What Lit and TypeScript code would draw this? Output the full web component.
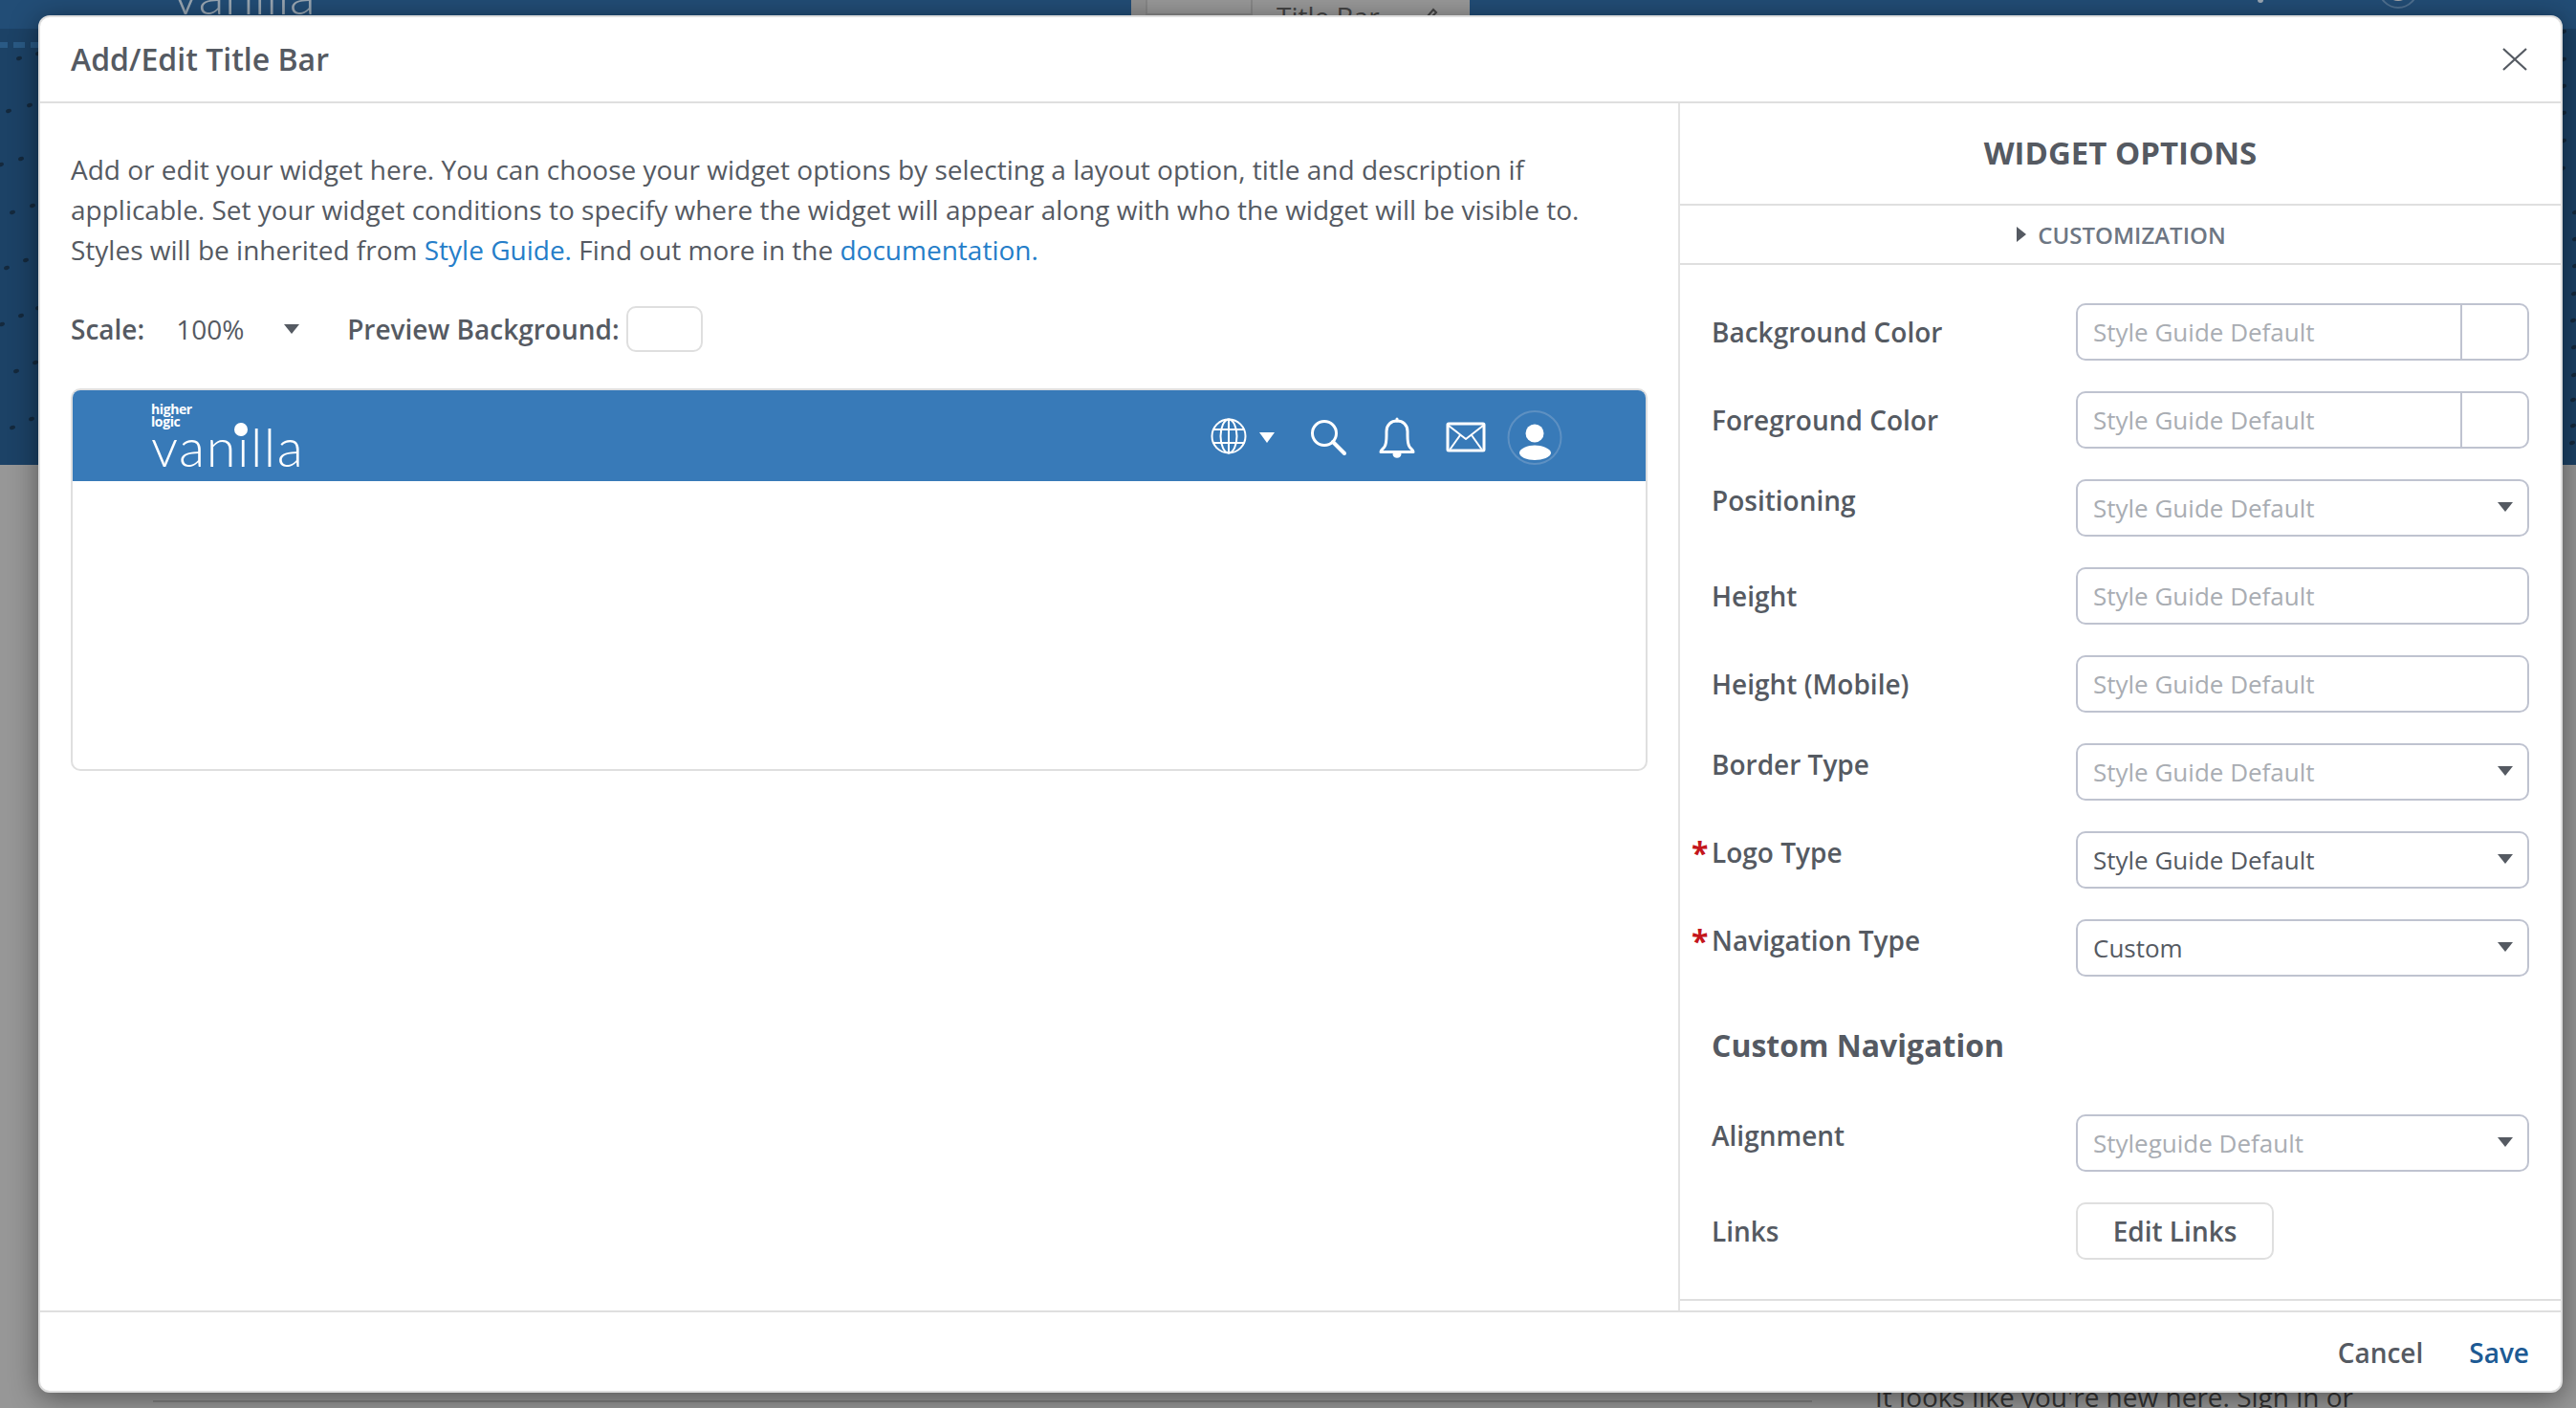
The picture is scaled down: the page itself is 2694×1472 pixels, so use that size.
import { LitElement, html, css, svg } from "lit";
import { customElement } from "lit/decorators.js";

const dots: [number, number][] = [
  [20, 61], [40, 56], [9, 116], [31, 110], [22, 166], [1, 172], [34, 215], [13, 222], [27, 272], [7, 280],
  [22, 330], [2, 339], [40, 322], [37, 379], [17, 388], [33, 438], [13, 447],
  [2681, 33], [2681, 62], [2681, 90], [2681, 118], [2681, 147], [2680, 176], [2693, 222], [2693, 250], [2693, 278],
  [2692, 307], [2691, 335], [2692, 363], [2692, 392], [2691, 418], [2691, 445], [2690, 463],
];
const dashes = [0, 12, 30, 60];

@customElement("app-root")
export class AppRoot extends LitElement {
  static styles = css`
    :host { display: block; width: 2694px; height: 1472px; position: relative; overflow: hidden; background: #979797; font-family: "Open Sans", sans-serif; color: #555a62; }
    * { box-sizing: border-box; }
    .hero { height: 486px; background: #1c4266; position: relative; overflow: hidden; }
    .heroband { height: 30px; background: #224d76; }
    .herotext { position: absolute; left: 180px; top: -36px; font-size: 56px; line-height: 60px; font-family: Lato, sans-serif; font-weight: 300; color: #9aa7b3; }
    .preview-peek { position: absolute; left: 1183px; top: 0; width: 354px; height: 20px; background: #999; border-left: 15px solid #929292; }
    .peek-tab { position: absolute; left: 1198px; top: 0; width: 112px; height: 16px; border-left: 2px solid #888; border-right: 2px solid #888; border-bottom: 2px solid #888; }
    .peek-title { position: absolute; left: 1335px; top: 0; font-size: 28px; line-height: 34px; color: #444; }
    .peek-pen { position: absolute; left: 1492px; top: 8px; }
    .heroav { position: absolute; left: 2487px; top: -33px; width: 42px; height: 42px; border: 2px solid #4f7090; border-radius: 50%; display: flex; align-items: center; justify-content: center; }
    .heroav span { width: 26px; height: 26px; background: #aaa; border-radius: 50%; }
    .peek { position: absolute; left: 1961px; top: 1440px; font-size: 28px; line-height: 40px; color: #333; white-space: nowrap; }
    .rule { position: absolute; left: 160px; top: 1464px; width: 1735px; height: 2px; background: #808080; }
    .dots { position: absolute; left: 0; top: 0; }
    .modal { position: absolute; left: 40px; top: 16px; width: 2640px; height: 1440px; background: #fff; border: 2px solid #dedede; border-radius: 12px; box-shadow: 0 5px 30px rgba(0,0,0,.45); display: flex; flex-direction: column; overflow: hidden; }
    .header { height: 90px; flex: none; border-bottom: 2px solid #dfdfdf; display: flex; align-items: center; justify-content: space-between; padding: 0 35px 0 32px; font-size: 32px; font-weight: 600; line-height: 44px; }
    .close { width: 26px; height: 24px; display: block; }
    .body { flex: 1; min-height: 0; display: flex; }
    .main { flex: 1; min-width: 0; padding: 48px 32px 0 32px; }
    .intro { font-size: 28px; line-height: 42px; margin: 0 0 38px; }
    a { color: #257ec9; text-decoration: none; }
    .toolbar { display: flex; align-items: center; height: 48px; margin-bottom: 38px; font-size: 28px; }
    .toolbar b { font-weight: 600; }
    .scale { margin-left: 33px; width: 113px; }
    .caret { width: 0; height: 0; border-left: 8px solid transparent; border-right: 8px solid transparent; border-top: 10px solid #555a62; }
    .toolbar b.pb { margin-left: 50px; }
    .swatch { width: 80px; height: 48px; margin-left: 7px; border: 2px solid #dfdfdf; border-radius: 10px; }
    .preview { height: 400px; border: 2px solid #dfdfdf; border-radius: 10px; overflow: hidden; }
    .bar { height: 95px; background: #387ab8; position: relative; color: #fff; }
    .logo { position: absolute; left: 82px; top: 13px; width: 170px; height: 80px; color: #fff; }
    .hl { position: absolute; left: 0; top: 0; font-size: 14px; line-height: 13px; font-weight: 700; letter-spacing: -0.4px; }
    .vn { position: absolute; left: 0; top: 16px; font-size: 56px; line-height: 60px; font-weight: 300; font-family: Lato, sans-serif; letter-spacing: 1.5px; }
    .dot { position: absolute; left: 87px; top: 21px; width: 14px; height: 14px; background: #fff; border-radius: 50%; }
    .icons { position: absolute; left: 1164px; top: 0; }
    .sidebar { width: 923px; flex: none; border-left: 2px solid #e3e3e3; display: flex; flex-direction: column; }
    .sh { height: 107px; flex: none; border-bottom: 2px solid #dfdfdf; padding-bottom: 2px; font-size: 33px; font-weight: 700; display: flex; align-items: center; justify-content: center; }
    .cust { height: 62px; flex: none; border-bottom: 2px solid #dfdfdf; padding-left: 2px; font-size: 24px; font-weight: 600; color: #6d7683; display: flex; align-items: center; justify-content: center; gap: 12px; }
    .tri { width: 0; height: 0; border-top: 8px solid transparent; border-bottom: 8px solid transparent; border-left: 10px solid #555a62; }
    .form { flex: 1; padding: 40px 33px 0; display: flex; flex-direction: column; border-bottom: 2px solid #dfdfdf; margin-bottom: 10px; }
    .row { display: flex; height: 60px; margin-bottom: 32px; position: relative; }
    .lab { width: 381px; flex: none; font-size: 28px; font-weight: 600; line-height: 60px; }
    .lab.hi { line-height: 44px; }
    .req { position: absolute; left: -21px; top: 1px; color: #c4161c; font-weight: 700; font-size: 32px; line-height: 44px; }
    .field { flex: 1; height: 60px; border: 2px solid #bfc3d0; border-radius: 10px; display: flex; align-items: center; padding-left: 16px; font-size: 26px; color: #a9adb3; position: relative; }
    .field.val { color: #555a62; }
    .field .sw { position: absolute; right: 0; top: 0; bottom: 0; width: 70px; border-left: 2px solid #bfc3d0; }
    .field .caret { position: absolute; right: 15px; top: 22px; }
    .cn { font-size: 32px; font-weight: 700; height: 60px; line-height: 60px; margin: 10px 0 42px; }
    .btn { width: 207px; height: 60px; border: 2px solid #dfdfdf; border-radius: 10px; font-size: 28px; font-weight: 600; display: flex; align-items: center; justify-content: center; }
    .footer { height: 84px; flex: none; border-top: 2px solid #dfdfdf; display: flex; align-items: center; justify-content: flex-end; padding: 2px 33px 0 0; gap: 48px; font-size: 28px; font-weight: 600; }
    .save { color: #1d5a94; }
  `;

  private field(text: string, opts: { val?: boolean; sw?: boolean; sel?: boolean } = {}) {
    return html`<div class="field ${opts.val ? "val" : ""}">${text}${opts.sw ? html`<span class="sw"></span>` : ""}${opts.sel ? html`<span class="caret"></span>` : ""}</div>`;
  }

  private row(label: string, f: unknown, hi = false, req = false) {
    return html`<div class="row">${req ? html`<span class="req">*</span>` : ""}<div class="lab ${hi ? "hi" : ""}">${label}</div>${f}</div>`;
  }

  render() {
    return html`
      <div class="hero">
        <div class="heroband"></div>
        <svg class="dots" width="2694" height="486">
          ${dashes.map((_, i) => svg`<rect x=${i * 18 - 4} y="44" width="12" height="6" fill="#2a5a85"></rect>`)}
          ${dots.map(([x, y]) => svg`<ellipse cx=${x} cy=${y} rx="3" ry="2" transform="rotate(-20 ${x} ${y})" fill="#14293d"></ellipse>`)}
          <circle cx="2364" cy="0" r="3" fill="#9aa7b3"></circle>
        </svg>
        <div class="herotext">vanilla</div>
        <div class="preview-peek"></div>
        <div class="peek-tab"></div>
        <div class="peek-title">Title Bar</div>
        <svg class="peek-pen" width="12" height="10" viewBox="0 0 12 10"><path d="M1 9L7 2L10 5L6 9" fill="none" stroke="#444" stroke-width="2"/></svg>
        <div class="heroav"><span></span></div>
      </div>
      <div class="rule"></div>
      <div class="peek">It looks like you're new here. Sign in or</div>
      <div class="modal">
        <div class="header">
          <span>Add/Edit Title Bar</span>
          <svg class="close" viewBox="0 0 26 24"><path d="M1 1L25 23M25 1L1 23" stroke="#555a62" stroke-width="2.2" fill="none"/></svg>
        </div>
        <div class="body">
          <div class="main">
            <p class="intro">Add or edit your widget here. You can choose your widget options by selecting a layout option, title and description if applicable. Set your widget conditions to specify where the widget will appear along with who the widget will be visible to. Styles will be inherited from <a>Style Guide.</a> Find out more in the <a>documentation.</a></p>
            <div class="toolbar">
              <b>Scale:</b><span class="scale">100%</span><span class="caret"></span>
              <b class="pb">Preview Background:</b><span class="swatch"></span>
            </div>
            <div class="preview">
              <div class="bar">
                <div class="logo"><div class="hl">higher<br>logic</div><div class="vn">vanilla</div><div class="dot"></div></div>
                <svg class="icons" width="420" height="94" viewBox="0 0 420 94" fill="none" stroke="#fff" stroke-linecap="round" stroke-linejoin="round">
                  <g stroke-width="2"><circle cx="45" cy="48" r="17.5"/><ellipse cx="45" cy="48" rx="8.5" ry="17.5"/><path d="M45 30.5V65.5M29 41H61M29 55H61"/></g>
                  <path d="M77 44H93L85 55Z" fill="#fff" stroke="none"/>
                  <g stroke-width="3"><circle cx="145" cy="45" r="12.5"/><path d="M154 54L166 66" stroke-width="4"/></g>
                  <g stroke-width="3"><path d="M204 64.5C204 62 206 62 208 59C210 56 210 52 210 47V43C210 36 215 32 221 32C227 32 232 36 232 43V47C232 52 232 56 234 59C236 62 238 62 238 64.5Z"/><path d="M221 30V32"/><path d="M218 67C219 70 223 70 224 67Z" fill="#fff"/></g>
                  <g stroke-width="3"><rect x="274" y="35" width="38" height="28" rx="1"/><path d="M275 37L293 51L311 37M277 61L287 47M309 61L299 47" stroke-width="2"/></g>
                  <circle cx="365" cy="49.5" r="27.5" stroke="#5d90c2" stroke-width="2"/>
                  <circle cx="365" cy="45" r="9.5" fill="#fff" stroke="none"/>
                  <path d="M349 65.5C349 61 358 57.5 365 57.5C372 57.5 382 61 382 65.5C382 70 373 73 365 73C357 73 349 70 349 65.5Z" fill="#fff" stroke="none"/>
                </svg>
              </div>
            </div>
          </div>
          <div class="sidebar">
            <div class="sh">WIDGET OPTIONS</div>
            <div class="cust"><span class="tri"></span>CUSTOMIZATION</div>
            <div class="form">
              ${this.row("Background Color", this.field("Style Guide Default", { sw: true }))}
              ${this.row("Foreground Color", this.field("Style Guide Default", { sw: true }))}
              ${this.row("Positioning", this.field("Style Guide Default", { sel: true }), true)}
              ${this.row("Height", this.field("Style Guide Default"))}
              ${this.row("Height (Mobile)", this.field("Style Guide Default"))}
              ${this.row("Border Type", this.field("Style Guide Default", { sel: true }), true)}
              ${this.row("Logo Type", this.field("Style Guide Default", { sel: true, val: true }), true, true)}
              ${this.row("Navigation Type", this.field("Custom", { sel: true, val: true }), true, true)}
              <div class="cn">Custom Navigation</div>
              ${this.row("Alignment", this.field("Styleguide Default", { sel: true }), true)}
              ${this.row("Links", html`<div class="btn">Edit Links</div>`)}
            </div>
          </div>
        </div>
        <div class="footer"><span>Cancel</span><span class="save">Save</span></div>
      </div>
    `;
  }
}
